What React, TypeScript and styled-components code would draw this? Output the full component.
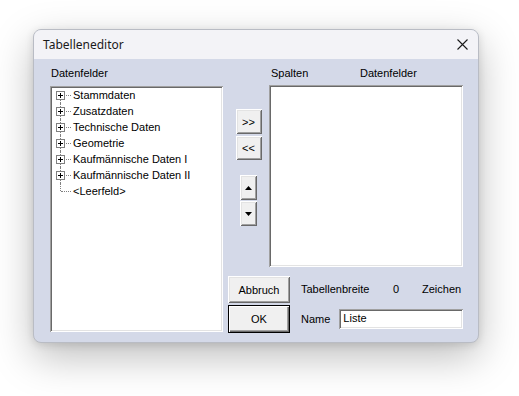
import React from 'react'
import styled, { createGlobalStyle } from 'styled-components'

const GLOBAL = createGlobalStyle`
    html, body {
        margin: 0;
        padding: 0;
        background: #ffffff;
    }
    body {
        font-family: "Liberation Sans", Arial, sans-serif;
        font-size: 11px;
        color: #000;
    }
`

const PAGE = styled.div`
    width: 519px;
    height: 396px;
    padding: 29px 0 0 33px;
    box-sizing: border-box;
`

const WINDOW = styled.div`
    width: 446px;
    height: 314px;
    border-radius: 8px;
    overflow: hidden;
    border: 1px solid #b9bcc4;
    box-sizing: border-box;
    background: #d4d9e8;
    box-shadow: 0 14px 40px rgba(0, 0, 0, 0.26), 0 2px 8px rgba(0, 0, 0, 0.12);
    display: flex;
    flex-direction: column;
`

const TITLEBAR = styled.div`
    height: 29px;
    flex: 0 0 29px;
    background: #f3f3f7;
    display: flex;
    align-items: center;
    justify-content: space-between;
    padding: 0 9px 0 9px;
    font-family: "Noto Sans", "Open Sans", sans-serif;
    font-size: 12px;
    color: #1a1a1a;
`

const CLOSE = styled.div`
    width: 12px;
    height: 12px;
    display: flex;
    align-items: center;
    justify-content: center;
    margin-right: 1px;
`

const BODY = styled.div`
    flex: 1;
    display: flex;
    padding: 8px 0 0 16px;
    gap: 5px;
`

const LEFTCOL = styled.div`
    width: 173px;
    display: flex;
    flex-direction: column;
`

const LABEL = styled.div<{ w?: number; indent?: number }>`
    height: 13px;
    line-height: 13px;
    ${p => p.w ? `width:${p.w}px;` : ''}
    ${p => p.indent ? `padding-left:${p.indent}px;` : ''}
    white-space: nowrap;
`

const SUNKEN = styled.div<{ h: number }>`
    height: ${p => p.h}px;
    background: #fff;
    box-sizing: border-box;
    box-shadow: inset 1px 1px #a0a0a0, inset -1px -1px #ffffff, inset 2px 2px #696969, inset -2px -2px #e3e3e3;
`

const TREE = styled(SUNKEN)`
    margin-top: 6px;
    padding: 1px 0 0 6px;
`

const TREEROW = styled.div`
    height: 16px;
    display: flex;
    align-items: center;
    white-space: nowrap;
`

const TWIG = styled.div<{ first?: boolean; last?: boolean }>`
    position: relative;
    width: 16px;
    height: 16px;
    flex: 0 0 16px;
    margin-right: 1px;

    /* vertical dotted line */
    &::before {
        content: "";
        position: absolute;
        left: 4px;
        top: ${p => p.first ? '8px' : '0'};
        height: ${p => p.last ? '8px' : (p.first ? '8px' : '16px')};
        border-left: 1px dotted #808080;
    }
    /* horizontal dotted line */
    &::after {
        content: "";
        position: absolute;
        left: 5px;
        top: 8px;
        width: 10px;
        border-top: 1px dotted #808080;
    }
`

const PLUSBOX = styled.div`
    position: absolute;
    left: 0;
    top: 4px;
    width: 9px;
    height: 9px;
    box-sizing: border-box;
    border: 1px solid #808080;
    background: #fff;
    z-index: 1;

    &::before {
        content: "";
        position: absolute;
        left: 1px;
        top: 3px;
        width: 5px;
        height: 1px;
        background: #000;
    }
    &::after {
        content: "";
        position: absolute;
        left: 3px;
        top: 1px;
        width: 1px;
        height: 5px;
        background: #000;
    }
`

const RIGHTAREA = styled.div`
    width: 236px;
    display: flex;
    flex-direction: column;
`

const TOPAREA = styled.div`
    display: flex;
`

const MOVECOL = styled.div`
    width: 41px;
    display: flex;
    flex-direction: column;
    align-items: center;
    padding-top: 42px;
`

const BUTTON = styled.button<{ w: number; h: number; isDefault?: boolean }>`
    width: ${p => p.w}px;
    height: ${p => p.h}px;
    padding: 0;
    margin: 0;
    border: none;
    background: #f0f0f0;
    font-family: "Liberation Sans", Arial, sans-serif;
    font-size: 11px;
    color: #000;
    display: flex;
    align-items: center;
    justify-content: center;
    box-shadow: ${p => p.isDefault
        ? 'inset 1px 1px #000, inset -1px -1px #000, inset 2px 2px #fff, inset -2px -2px #696969, inset -3px -3px #a0a0a0'
        : 'inset 1px 1px #fff, inset -1px -1px #696969, inset 2px 2px #e3e3e3, inset -2px -2px #a0a0a0'};
`

const GAP = styled.div<{ h: number }>`
    height: ${p => p.h}px;
    flex: 0 0 ${p => p.h}px;
`

const LISTCOL = styled.div`
    width: 194px;
    display: flex;
    flex-direction: column;
`

const HEADROW = styled.div`
    display: flex;
    padding-left: 2px;
`

const LIST = styled(SUNKEN)`
    margin-top: 5px;
`

const BOTTOMGRID = styled.div`
    margin-top: 9px;
    display: grid;
    grid-template-columns: 62px 162px;
    column-gap: 11px;
    row-gap: 2px;
    align-items: center;
`

const INFOROW = styled.div`
    display: flex;
    align-items: center;
    white-space: nowrap;
`

const TEXTINPUT = styled.div`
    width: 129px;
    height: 20px;
    margin-left: 9px;
    background: #fff;
    box-sizing: border-box;
    padding: 3px 0 0 4px;
    box-shadow: inset 1px 1px #a0a0a0, inset -1px -1px #ffffff, inset 2px 2px #696969, inset -2px -2px #e3e3e3;
`

const Arrow = ({ up }: { up?: boolean }) => (
    <svg width="7" height="4" viewBox="0 0 7 4">
        <polygon points={up ? '3.5,0 7,4 0,4' : '0,0 7,0 3.5,4'} fill="#000" />
    </svg>
)

const treeItems = [
    'Stammdaten',
    'Zusatzdaten',
    'Technische Daten',
    'Geometrie',
    'Kaufmännische Daten I',
    'Kaufmännische Daten II',
]

export default function App() {
    return (
        <PAGE>
            <GLOBAL />
            <WINDOW>
                <TITLEBAR>
                    <span>Tabelleneditor</span>
                    <CLOSE>
                        <svg width="11" height="11" viewBox="0 0 11 11">
                            <path d="M0.5 0.5 L10.5 10.5 M10.5 0.5 L0.5 10.5" stroke="#1a1a1a" strokeWidth="1.1" />
                        </svg>
                    </CLOSE>
                </TITLEBAR>
                <BODY>
                    <LEFTCOL>
                        <LABEL indent={1}>Datenfelder</LABEL>
                        <TREE h={246}>
                            {treeItems.map((item, i) => (
                                <TREEROW key={item}>
                                    <TWIG first={i === 0}>
                                        <PLUSBOX />
                                    </TWIG>
                                    {item}
                                </TREEROW>
                            ))}
                            <TREEROW>
                                <TWIG last />
                                {'<Leerfeld>'}
                            </TREEROW>
                        </TREE>
                    </LEFTCOL>
                    <RIGHTAREA>
                        <TOPAREA>
                            <MOVECOL>
                                <BUTTON w={26} h={25}>&gt;&gt;</BUTTON>
                                <GAP h={2} />
                                <BUTTON w={26} h={24}>&lt;&lt;</BUTTON>
                                <GAP h={15} />
                                <BUTTON w={17} h={25}><Arrow up /></BUTTON>
                                <GAP h={1} />
                                <BUTTON w={17} h={25}><Arrow /></BUTTON>
                            </MOVECOL>
                            <LISTCOL>
                                <HEADROW>
                                    <LABEL w={89}>Spalten</LABEL>
                                    <LABEL>Datenfelder</LABEL>
                                </HEADROW>
                                <LIST h={182} />
                            </LISTCOL>
                        </TOPAREA>
                        <BOTTOMGRID>
                            <BUTTON w={62} h={27}>Abbruch</BUTTON>
                            <INFOROW>
                                <LABEL w={92}>Tabellenbreite</LABEL>
                                <LABEL w={29}>0</LABEL>
                                <LABEL>Zeichen</LABEL>
                            </INFOROW>
                            <BUTTON w={62} h={28} isDefault>OK</BUTTON>
                            <INFOROW>
                                <LABEL>Name</LABEL>
                                <TEXTINPUT>Liste</TEXTINPUT>
                            </INFOROW>
                        </BOTTOMGRID>
                    </RIGHTAREA>
                </BODY>
            </WINDOW>
        </PAGE>
    )
}
